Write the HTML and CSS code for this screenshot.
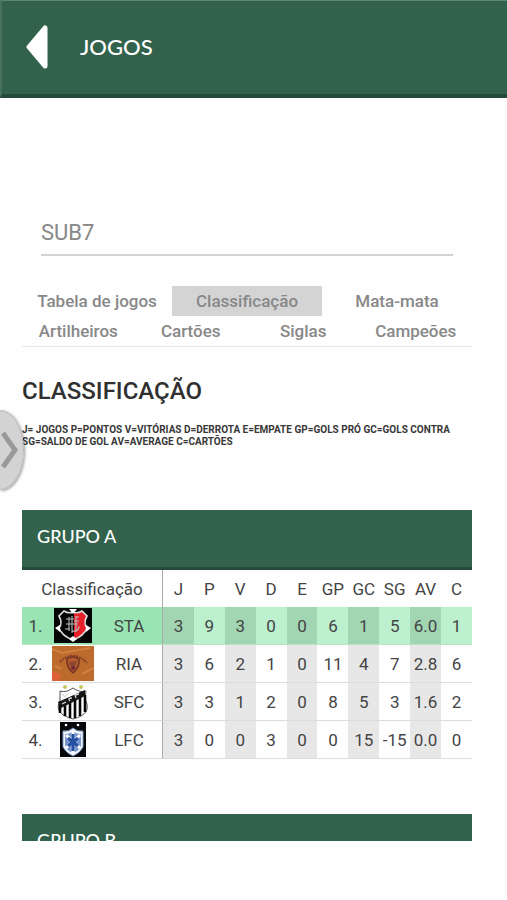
FILE: index.html
```html
<!DOCTYPE html>
<html lang="pt-BR">
<head>
  <meta charset="UTF-8" />
  <meta name="viewport" content="width=device-width, initial-scale=1.0" />
  <title>Jogos</title>
  <link rel="stylesheet" href="styles.css">
</head>
<body>
  <div class="screen">
    <header class="topbar">
      <button class="back" type="button" aria-label="Voltar">
        <svg width="22" height="44" viewBox="0 0 22 44"><path d="M19 3V41L3 22Z" fill="#fff" stroke="#fff" stroke-width="5" stroke-linejoin="round"/></svg>
      </button>
      <h1>JOGOS</h1>
    </header>

    <main class="content">
      <select class="category" aria-label="Categoria">
        <option>SUB7</option>
      </select>

      <nav class="tabs">
        <div class="tab-row">
          <button type="button">Tabela de jogos</button>
          <button type="button" class="active">Classificação</button>
          <button type="button">Mata-mata</button>
        </div>
        <div class="tab-row">
          <button type="button">Artilheiros</button>
          <button type="button">Cartões</button>
          <button type="button">Siglas</button>
          <button type="button">Campeões</button>
        </div>
      </nav>

      <h2>CLASSIFICAÇÃO</h2>
      <p class="legend">J= JOGOS P=PONTOS V=VITÓRIAS D=DERROTA E=EMPATE GP=GOLS PRÓ GC=GOLS CONTRA<br>SG=SALDO DE GOL AV=AVERAGE C=CARTÕES</p>

      <section class="group">
        <h3>GRUPO A</h3>
        <table>
          <colgroup>
            <col class="col-rank"><col class="col-crest"><col class="col-name">
            <col span="10">
          </colgroup>
          <thead>
            <tr>
              <th colspan="3" class="team">Classificação</th>
              <th>J</th><th>P</th><th>V</th><th>D</th><th>E</th><th>GP</th><th>GC</th><th>SG</th><th>AV</th><th>C</th>
            </tr>
          </thead>
          <tbody>
            <tr class="leader">
              <td>1.</td>
              <td>
                <svg class="crest" width="38" height="35" viewBox="0 0 38 35">
                  <rect width="38" height="35" fill="#050505"/>
                  <path d="M20 5V31Q30 28 33 20Q29 15 33 8L28 3Q23 6 20 5Z" fill="#e8202a"/>
                  <path d="M10 3Q15 6 19 4Q23 6 28 3L33 8Q29 15 33 20Q30 28 19 32Q8 28 5 20Q9 15 5 8Z" fill="none" stroke="#ddd" stroke-width="1.6"/>
                  <path d="M15 1H23L19 6ZM1 20L6 17V24ZM37 20L32 17V24ZM15 31L19 28L23 31L19 34Z" fill="#fff"/>
                  <path d="M12 11H20M15 9V23M12 16H24M18 8V25M22 8V24M22 9H25M11 21H16M18 23Q25 24 25 18M20 13H25" fill="none" stroke="#bbb" stroke-width="1.1"/>
                </svg>
              </td>
              <td class="team">STA</td>
              <td>3</td><td>9</td><td>3</td><td>0</td><td>0</td><td>6</td><td>1</td><td>5</td><td>6.0</td><td>1</td>
            </tr>
            <tr>
              <td>2.</td>
              <td>
                <svg class="crest" width="42" height="35" viewBox="0 0 42 35">
                  <rect width="42" height="35" fill="#bd6b2c"/>
                  <path d="M0 35V25L9 29L6 35Z" fill="#e0603a"/>
                  <path d="M0 3L11 7L20 5L38 2M30 28L42 22M3 20L10 23" fill="none" stroke="#cf8142" stroke-width="2"/>
                  <path d="M8 16Q21 3 35 17" fill="none" stroke="#803c28" stroke-width="2" stroke-dasharray="2 1"/>
                  <path d="M15 13Q21 9 27 13Q28 21 21 27Q14 21 15 13Z" fill="#b45c2c" stroke="#733326" stroke-width="1.5"/>
                  <path d="M17 16L25 15L23 21L18 20Z" fill="#8b4730"/>
                  <circle cx="21" cy="22" r="2" fill="#70253c"/>
                </svg>
              </td>
              <td class="team">RIA</td>
              <td>3</td><td>6</td><td>2</td><td>1</td><td>0</td><td>11</td><td>4</td><td>7</td><td>2.8</td><td>6</td>
            </tr>
            <tr>
              <td>3.</td>
              <td>
                <svg class="crest" width="34" height="36" viewBox="0 0 34 36">
                  <path d="M4 7Q10 9 17 4Q24 9 30 7L29 15Q37 30 17 35Q-3 30 4 16Z" fill="#fff" stroke="#555" stroke-width="1"/>
                  <path d="M4 20V29M9 19V32M14 17V34M19 15V34M24 12V32M29 11V28" stroke="#080808" stroke-width="2.6"/>
                  <path d="M2 18L29 6V12L5 24Z" fill="#151515"/>
                  <path d="M6 20L10 18M14 17Q11 14 16 14M20 14L19 11L23 10M5 9L9 13L12 9" fill="none" stroke="#ddd" stroke-width="1.3"/>
                  <circle cx="9" cy="3" r="2" fill="#c5c85a"/><circle cx="25" cy="3" r="2" fill="#c5c85a"/>
                </svg>
              </td>
              <td class="team">SFC</td>
              <td>3</td><td>3</td><td>1</td><td>2</td><td>0</td><td>8</td><td>5</td><td>3</td><td>1.6</td><td>2</td>
            </tr>
            <tr>
              <td>4.</td>
              <td>
                <svg class="crest" width="26" height="35" viewBox="0 0 26 35">
                  <rect width="26" height="35" fill="#05070b"/>
                  <path d="M3 9Q9 10 13 6Q17 10 23 9V25Q20 31 13 34Q6 31 3 25Z" fill="#f4f7ff" stroke="#819cca" stroke-width="1"/>
                  <path d="M5 12Q10 12 13 9Q16 12 21 12V24Q19 29 13 31Q7 29 5 24Z" fill="#7796ce"/>
                  <path d="M13 9V31M6 13L20 26M20 13L6 26" stroke="#fff" stroke-width="3"/>
                  <path d="M13 12V29M8 16L18 24M18 16L8 24" stroke="#2450a2" stroke-width="3"/>
                  <path d="M10 20H16" stroke="#2450a2" stroke-width="4"/>
                  <circle cx="6" cy="3" r="1.3" fill="#fff"/><circle cx="18" cy="3" r="1.3" fill="#fff"/>
                </svg>
              </td>
              <td class="team">LFC</td>
              <td>3</td><td>0</td><td>0</td><td>3</td><td>0</td><td>0</td><td>15</td><td>-15</td><td>0.0</td><td>0</td>
            </tr>
          </tbody>
        </table>
      </section>

      <section class="group">
        <h3>GRUPO B</h3>
      </section>
    </main>

    <button class="drawer" type="button" aria-label="Abrir menu">
      <svg width="18" height="38" viewBox="0 0 18 38"><path d="M3 2L15 19L3 36" fill="none" stroke="#999" stroke-width="5"/></svg>
    </button>
  </div>
</body>
</html>
```

FILE: styles.css
```css
* {
  box-sizing: border-box;
}
body {
  margin: 0;
  background-color: #fefefe;
  font-family: Roboto, "Liberation Sans", sans-serif;
  color: #444;
}
button {
  padding: 0;
  border: 0;
  background: none;
  font-family: inherit;
  cursor: pointer;
}
svg {
  display: block;
}
.screen {
  position: relative;
  display: flex;
  flex-direction: column;
  height: 100vh;
  padding-bottom: 59px;
  overflow: hidden;
}

/* top bar */
.topbar {
  display: flex;
  flex-shrink: 0;
  align-items: center;
  gap: 32px;
  height: 98px;
  padding: 0 0 2px 24px;
  background-color: #32624c;
  border-top: 1px solid #5c8573;
  border-left: 2px solid #476f5d;
  border-bottom: 4px solid #25493a;
}
.topbar h1 {
  margin: 0;
  font-family: Lato, sans-serif;
  font-size: 22px;
  font-weight: 500;
  color: #fff;
}

.content {
  flex: 1;
  min-height: 0;
  padding: 112px 35px 0 22px;
  overflow: hidden;
}
.category {
  display: block;
  width: calc(100% - 38px);
  height: 46px;
  margin: 0 19px 30px;
  padding: 0;
  appearance: none;
  border: 0;
  border-bottom: 2px solid #d3d3d3;
  border-radius: 0;
  background: none;
  font-family: inherit;
  font-size: 22px;
  color: #888;
}

/* tabs */
.tabs {
  border-bottom: 1px solid #e6e6e6;
}
.tab-row {
  display: flex;
}
.tab-row button {
  flex: 1 1 0;
  height: 30px;
  font-size: 17px;
  font-weight: 500;
  color: #888;
}
.tab-row .active {
  background-color: #d4d4d4;
}

h2 {
  margin: 28px 0 17px;
  font-size: 24px;
  font-weight: 500;
  line-height: 32px;
  color: #303030;
}
.legend {
  margin: 0 0 62px;
  font-size: 10px;
  font-weight: 700;
  line-height: 12px;
  color: #383838;
}

/* groups */
.group {
  margin-bottom: 55px;
}
.group h3 {
  height: 60px;
  margin: 0;
  padding-left: 15px;
  background-color: #32624c;
  border-bottom: 3px solid #25493a;
  font-family: Lato, sans-serif;
  font-size: 18px;
  font-weight: 500;
  line-height: 52px;
  color: #fff;
}
table {
  width: 100%;
  table-layout: fixed;
  border-spacing: 0;
  font-size: 17px;
  text-align: center;
}
.col-rank {
  width: 27px;
}
.col-crest {
  width: 47px;
}
.col-name {
  width: 67px;
}
th, td {
  padding: 0;
  font-weight: 400;
  white-space: nowrap;
}
th {
  height: 37px;
}
td {
  height: 38px;
  border-bottom: 1px solid #dcdcdc;
}
.team {
  border-right: 1px solid #aaa;
}
td:nth-child(2n + 4) {
  background-color: #e7e7e7;
}
.leader td {
  background-color: #bdf0ce;
  border-bottom-color: #b5e5c5;
}
.leader td:nth-child(-n + 3) {
  background-color: #98e4b2;
}
.leader td:nth-child(2n + 4) {
  background-color: #a2d6b3;
}
.crest {
  margin: 0 auto;
}

/* side drawer handle */
.drawer {
  position: absolute;
  top: 410px;
  left: 0;
  width: 24px;
  height: 80px;
  background-color: rgba(200, 200, 200, 0.8);
  border: 1px solid #bbb;
  border-left: 0;
  border-radius: 0 24px 24px 0 / 0 40px 40px 0;
  box-shadow: 1px 1px 3px rgba(0, 0, 0, 0.4);
}
```
